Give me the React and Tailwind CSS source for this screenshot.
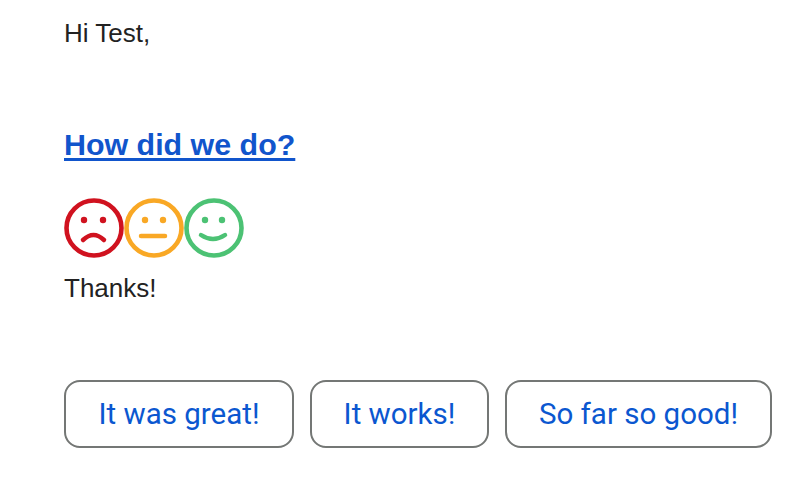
const body = { fontFamily: '"Liberation Sans", Arial, sans-serif' };

function Face({ color, children }) {
  return (
    <svg width="60" height="60" viewBox="0 0 60 60" fill="none" className="block shrink-0 blur-[0.7px]">
      <circle cx="30" cy="30" r="27.5" stroke={color} strokeWidth="4.6" />
      {children}
    </svg>
  );
}

function Reply({ children, className }) {
  return (
    <button
      type="button"
      className={`h-[68px] rounded-[16px] border-2 border-[#747775] bg-white text-[#0b57d0] text-[29.5px] ${className}`}
      style={{ fontFamily: 'Roboto, "Noto Sans", sans-serif' }}
    >
      {children}
    </button>
  );
}

export default function App() {
  return (
    <div className="w-[808px] h-[478px] overflow-hidden bg-white pl-16 text-[#222222]" style={body}>
      <p className="pt-[15px] text-[26px] leading-[36px]">Hi Test,</p>
      <a href="#" className="block mt-[75px] text-[30.4px] leading-[36px] font-bold text-[#1155cc] underline decoration-[3px] underline-offset-[3px]">
        How did we do?
      </a>
      <div className="flex mt-[36px]">
        <Face color="#d0121f">
          <circle cx="20" cy="22" r="3.2" fill="#d0121f" />
          <circle cx="39" cy="22" r="3.2" fill="#d0121f" />
          <path d="M19 42 Q29.5 32 40 42" stroke="#d0121f" strokeWidth="4.5" strokeLinecap="round" />
        </Face>
        <Face color="#f9a825">
          <circle cx="21" cy="22" r="3.2" fill="#f9a825" />
          <circle cx="39" cy="22" r="3.2" fill="#f9a825" />
          <path d="M17 38 H41" stroke="#f9a825" strokeWidth="4.5" strokeLinecap="round" />
        </Face>
        <Face color="#4cc274">
          <circle cx="21" cy="22" r="3.2" fill="#4cc274" />
          <circle cx="38" cy="22" r="3.2" fill="#4cc274" />
          <path d="M17 37 Q29 45 41 37" stroke="#4cc274" strokeWidth="4.5" strokeLinecap="round" />
        </Face>
      </div>
      <p className="mt-[12px] text-[26px] leading-[36px]">Thanks!</p>
      <div className="flex gap-4 mt-[74px]">
        <Reply className="w-[230px]">It was great!</Reply>
        <Reply className="w-[179px]">It works!</Reply>
        <Reply className="w-[267px]">So far so good!</Reply>
      </div>
    </div>
  );
}
